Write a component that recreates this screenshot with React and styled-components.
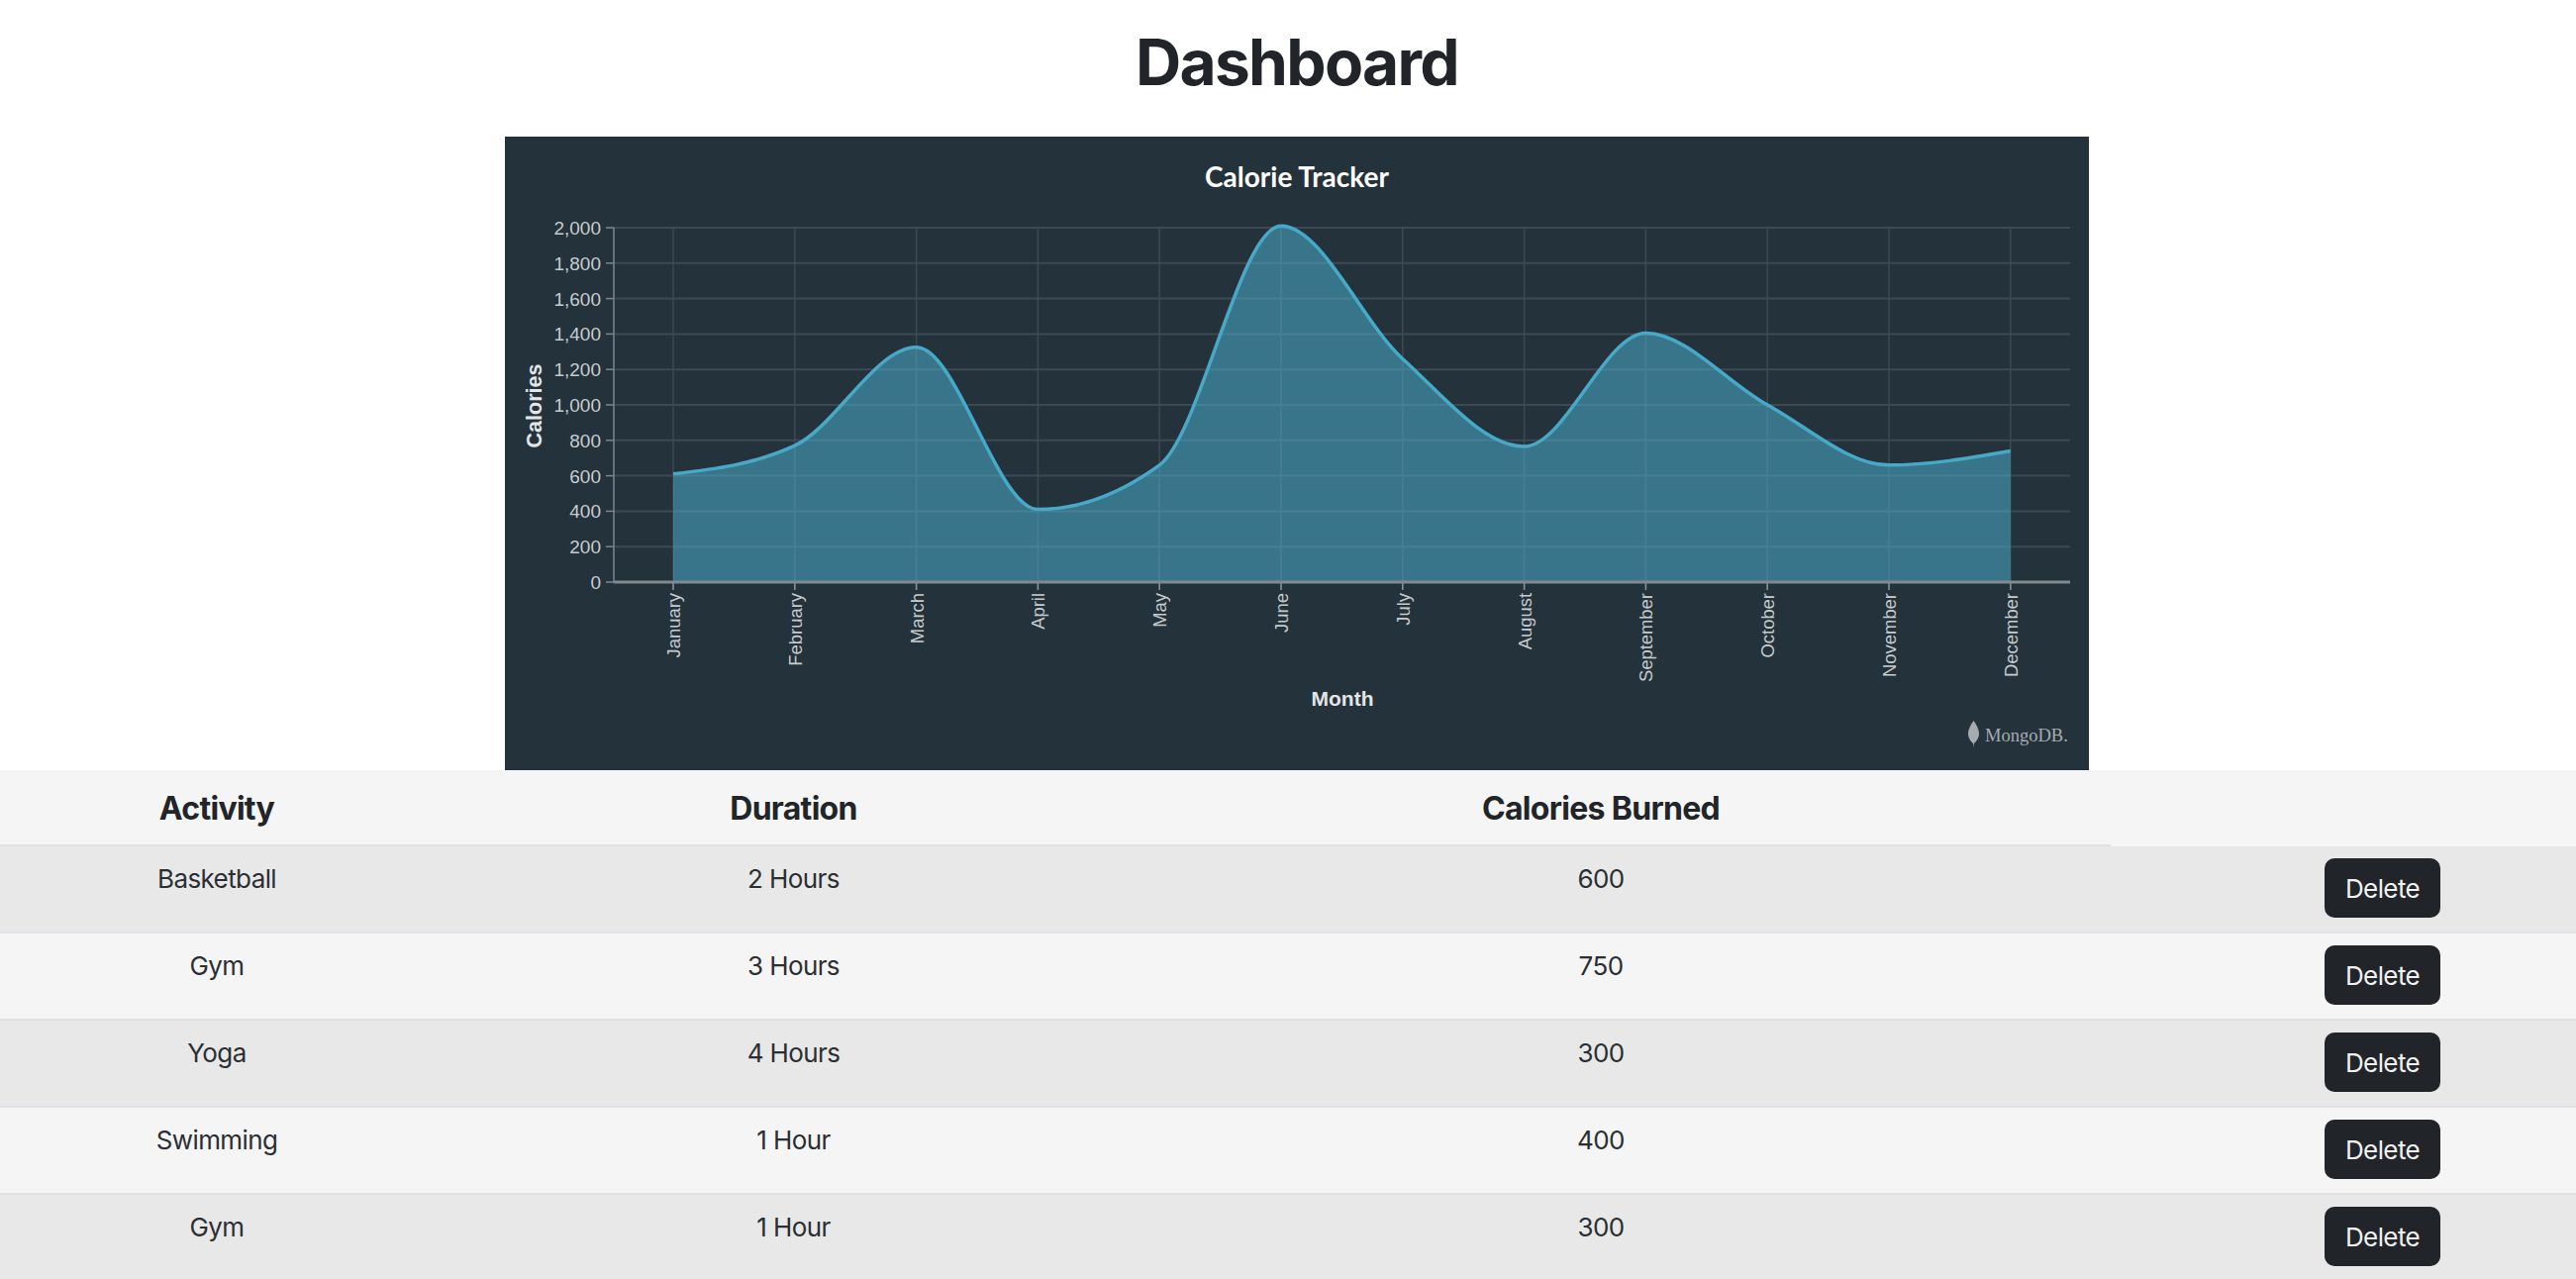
import React from 'react'
import styled, { createGlobalStyle } from 'styled-components'

const GlobalStyle = createGlobalStyle`
  html, body {
    margin: 0;
    padding: 0;
    background: #fff;
    color: #212529;
    font-family: Inter, "Liberation Sans", sans-serif;
  }
`

const Page = styled.div`
  width: 2602px;
  height: 1292px;
  overflow: hidden;
`

const Top = styled.div`
  display: flex;
  flex-flow: column;
  align-items: center;
  padding-left: 18px;
`

const Title = styled.h1`
  height: 138px;
  margin: 0;
  font-size: 64px;
  line-height: 126px;
  font-weight: 700;
  letter-spacing: -1.7px;
  color: #212529;
`

const ChartFrame = styled.div`
  width: 1600px;
  height: 640px;
  background: #24323c;
`

const ChartSvg = styled.svg`
  display: block;
`

const Head = styled.div`
  background: #f5f5f5;
`

const HeadRow = styled.div`
  display: grid;
  grid-template-columns: 438px 727px 904px 63px;
  width: 2132px;
  height: 75px;
  border-bottom: 2px solid #dee2e6;
  box-sizing: content-box;
`

const HeadCell = styled.div`
  padding-top: 15px;
  font-size: 32px;
  line-height: 48px;
  font-weight: 700;
  letter-spacing: -0.7px;
  text-align: center;
  color: #212529;
`

const Row = styled.div`
  display: grid;
  grid-template-columns: 438px 727px 904px 1fr;
  height: 86px;
  border-bottom: 2px solid #dee2e6;
  background: ${props => (props.$odd ? '#e8e8e8' : '#f5f5f5')};
`

const Cell = styled.div`
  padding-top: 13px;
  font-size: 26px;
  line-height: 40px;
  letter-spacing: -0.6px;
  text-align: center;
  color: #2b2f33;
`

const ActionCell = styled.div`
  display: flex;
  justify-content: flex-end;
  padding: 12px 137px 0 0;
`

const DeleteButton = styled.button`
  width: 117px;
  height: 60px;
  padding: 0;
  border: 0;
  border-radius: 10px;
  background: #212529;
  color: #f1f1f1;
  font-family: inherit;
  font-size: 26px;
  letter-spacing: -0.6px;
`

const months = ['January', 'February', 'March', 'April', 'May', 'June', 'July', 'August', 'September', 'October', 'November', 'December']
const calories = [610, 770, 1325, 410, 660, 2010, 1260, 765, 1405, 1000, 660, 740]
const yTicks = [0, 200, 400, 600, 800, 1000, 1200, 1400, 1600, 1800, 2000]

const rows = [
  ['Basketball', '2 Hours', '600'],
  ['Gym', '3 Hours', '750'],
  ['Yoga', '4 Hours', '300'],
  ['Swimming', '1 Hour', '400'],
  ['Gym', '1 Hour', '300'],
]

const xAt = i => 170 + i * 122.8
const yAt = v => 450 - v * 0.179

// same idea as d3 curveMonotoneX
const monotonePath = points => {
  const n = points.length
  const dx = [], slope = []
  for (let i = 0; i < n - 1; i++) {
    dx[i] = points[i + 1][0] - points[i][0]
    slope[i] = (points[i + 1][1] - points[i][1]) / dx[i]
  }
  const t = []
  for (let i = 1; i < n - 1; i++) {
    const a = slope[i - 1], b = slope[i]
    const p = (a * dx[i] + b * dx[i - 1]) / (dx[i - 1] + dx[i])
    t[i] = (Math.sign(a) + Math.sign(b)) * Math.min(Math.abs(a), Math.abs(b), 0.5 * Math.abs(p)) || 0
  }
  t[0] = (3 * slope[0] - t[1]) / 2
  t[n - 1] = (3 * slope[n - 2] - t[n - 2]) / 2
  let d = `M${points[0][0]},${points[0][1]}`
  for (let i = 0; i < n - 1; i++) {
    const h = dx[i] / 3
    d += `C${points[i][0] + h},${points[i][1] + t[i] * h} ${points[i + 1][0] - h},${points[i + 1][1] - t[i + 1] * h} ${points[i + 1][0]},${points[i + 1][1]}`
  }
  return d
}

const CalorieChart = () => {
  const line = monotonePath(calories.map((v, i) => [xAt(i), yAt(v)]))
  const area = `${line}L${xAt(11)},450L${xAt(0)},450Z`
  return (
    <ChartSvg width="1600" height="640" viewBox="0 0 1600 640">
      <text x="800" y="51" textAnchor="middle" fill="#fff" fontFamily="Lato, sans-serif" fontWeight="700" fontSize="28">Calorie Tracker</text>

      {yTicks.map(v => (
        <g key={v}>
          <line x1="110" x2="1581" y1={yAt(v)} y2={yAt(v)} stroke="#3d4a53" strokeWidth="2" />
          <line x1="102" x2="110" y1={yAt(v)} y2={yAt(v)} stroke="#7d878d" strokeWidth="1.5" />
          <text x="97" y={yAt(v) + 7} textAnchor="end" fill="#c6cbce" fontFamily="Liberation Sans, sans-serif" fontSize="19">{v.toLocaleString('en-US')}</text>
        </g>
      ))}
      {months.map((m, i) => (
        <g key={m}>
          <line x1={xAt(i)} x2={xAt(i)} y1="92" y2="458" stroke="#3d4a53" strokeWidth="1.5" />
          <line x1={xAt(i)} x2={xAt(i)} y1="450" y2="458" stroke="#8a9399" strokeWidth="1.5" />
          <text transform={`translate(${xAt(i) + 7},461) rotate(-90) scale(0.97,1)`} textAnchor="end" fill="#c6cbce" fontFamily="Liberation Sans, sans-serif" fontSize="19">{m}</text>
        </g>
      ))}
      <line x1="110" x2="110" y1="92" y2="450" stroke="#7d878d" strokeWidth="1.5" />

      <path d={area} fill="rgb(75,170,200)" fillOpacity="0.56" />
      <path d={line} fill="none" stroke="#47a9c8" strokeWidth="3.5" />
      <line x1="110" x2="1581" y1="450" y2="450" stroke="#808a8f" strokeWidth="3" />

      <text transform="translate(37,272) rotate(-90)" textAnchor="middle" fill="#e3e5e7" fontFamily="Liberation Sans, sans-serif" fontWeight="700" fontSize="21.5">Calories</text>
      <text x="846" y="575" textAnchor="middle" fill="#e3e5e7" fontFamily="Liberation Sans, sans-serif" fontWeight="700" fontSize="21">Month</text>

      <path d="M1483.5 590 C1480 595 1478 599 1478 603 C1478 608 1481 611 1483 613 L1483.5 617 L1484 613 C1486 611 1489 608 1489 603 C1489 599 1487 595 1483.5 590Z" fill="#a6abaf" />
      <text x="1495" y="611" fill="#a6abaf" fontFamily="Liberation Serif, serif" fontSize="18.5">MongoDB.</text>
    </ChartSvg>
  )
}

const App = () => {
  return (
    <Page>
      <GlobalStyle />
      <Top>
        <Title>Dashboard</Title>
        <ChartFrame>
          <CalorieChart />
        </ChartFrame>
      </Top>
      <Head>
        <HeadRow>
          <HeadCell>Activity</HeadCell>
          <HeadCell>Duration</HeadCell>
          <HeadCell>Calories Burned</HeadCell>
          <HeadCell />
        </HeadRow>
      </Head>
      {rows.map((row, i) => (
        <Row key={i} $odd={i % 2 === 0}>
          <Cell>{row[0]}</Cell>
          <Cell>{row[1]}</Cell>
          <Cell>{row[2]}</Cell>
          <ActionCell>
            <DeleteButton>Delete</DeleteButton>
          </ActionCell>
        </Row>
      ))}
    </Page>
  )
}

export default App
